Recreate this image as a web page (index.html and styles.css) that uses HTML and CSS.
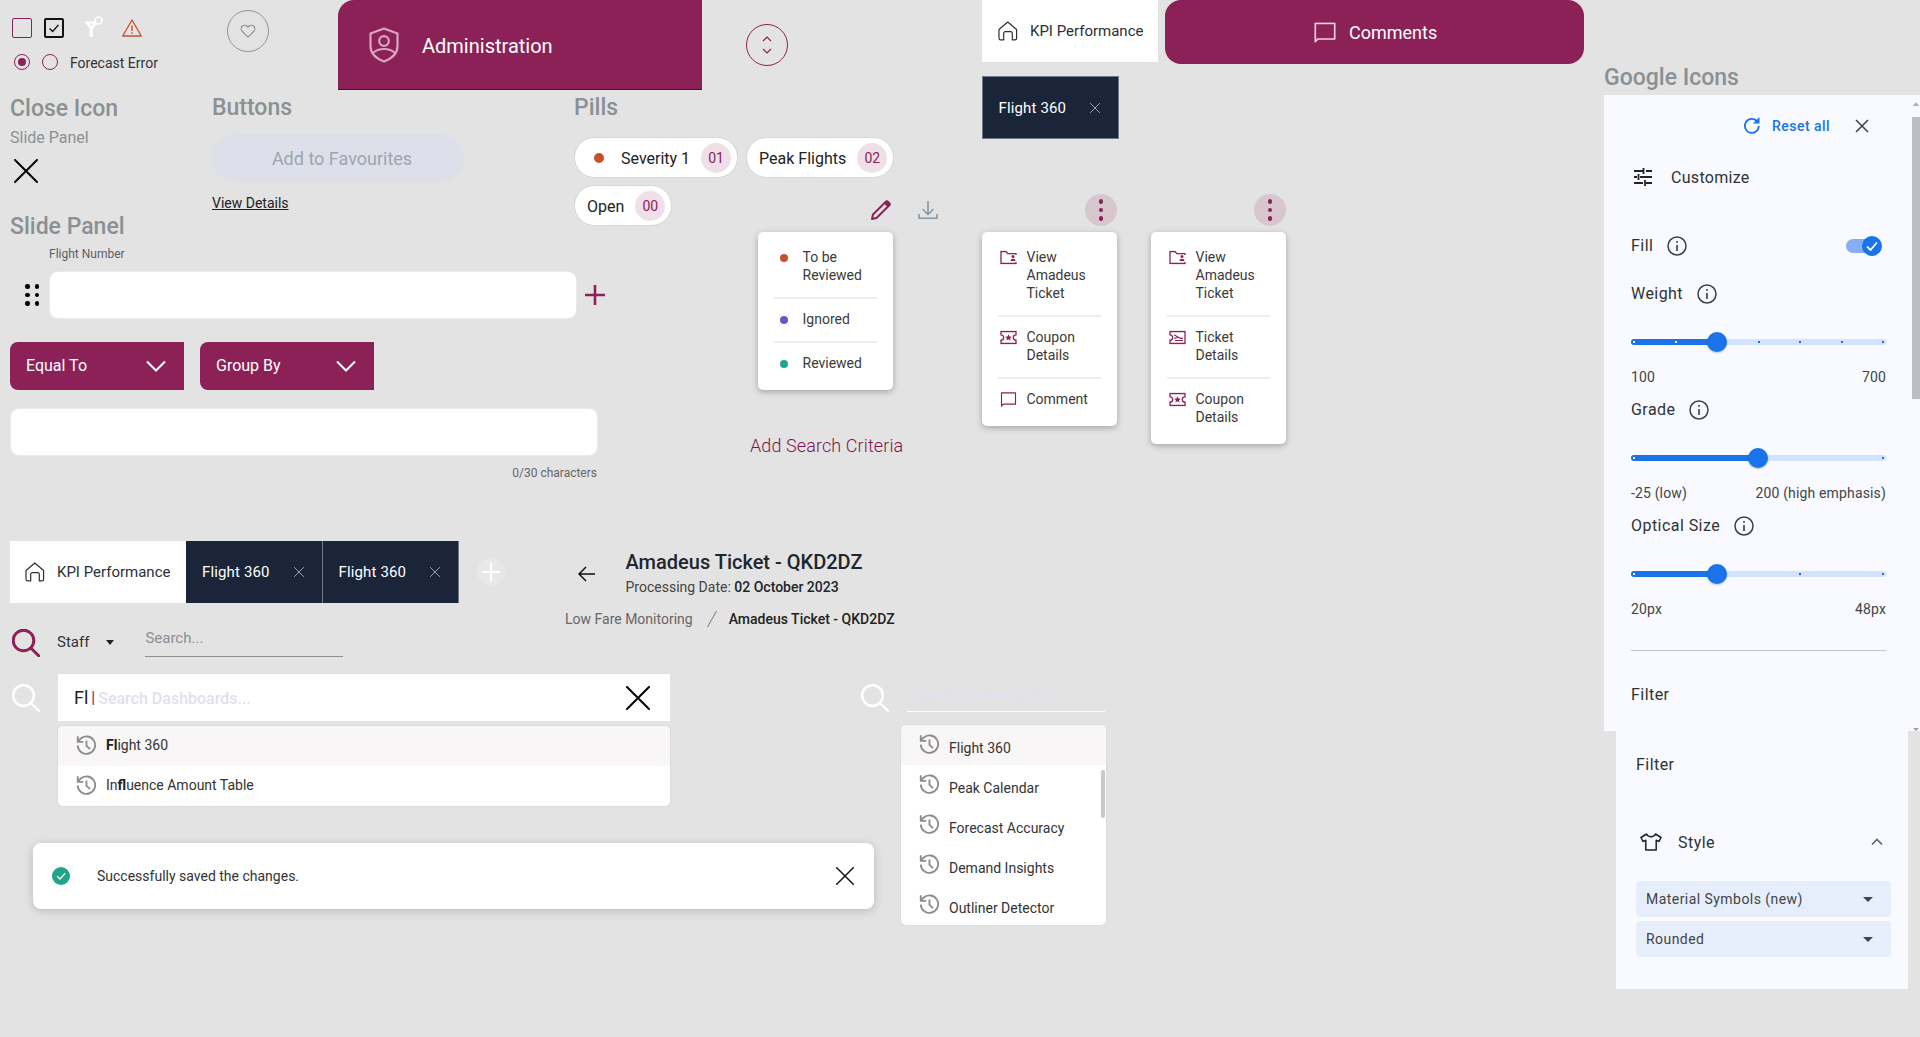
FILE: index.html
```html
<!DOCTYPE html>
<html lang="en">
<head>
<meta charset="utf-8">
<title>Component sheet</title>
<link rel="stylesheet" href="styles.css">
</head>
<body>
<svg class="sprite" aria-hidden="true">
  <defs>
    <symbol id="i-x" viewBox="0 0 24 24"><path d="M1 1 23 23M23 1 1 23" fill="none" stroke="currentColor" stroke-width="2" stroke-linecap="round"/></symbol>
    <symbol id="i-home" viewBox="0 0 20 20"><path d="M1 8.5 9.8 1l8.8 7.5v8.7a1.6 1.6 0 0 1-1.6 1.6h-2.7v-6.6a1.6 1.6 0 0 0-1.6-1.6H7.300a1.600 1.600 0 0 0-1.600 1.600v6.600H2.600A1.600 1.600 0 0 1 1 17.200Z" fill="none" stroke="currentColor" stroke-width="1.200" stroke-linejoin="round"/></symbol>
    <symbol id="i-history" viewBox="0 0 24 24"><g fill="none" stroke="currentColor" stroke-width="2"><path d="M3 12.500A9.500 9.500 0 1 0 6 5.200L3.200 8"/><path d="M3 2.500V8.500H9" stroke-linejoin="miter"/><path d="M12.500 7v6l4 3.500"/></g></symbol>
    <symbol id="i-search" viewBox="0 0 28 28"><circle cx="11.500" cy="11.500" r="10.300" fill="none" stroke="currentColor"/><path d="M18.800 19 27 27" fill="none" stroke="currentColor" stroke-linecap="round"/></symbol>
    <symbol id="i-info" viewBox="0 0 20 20"><circle cx="10" cy="10" r="9" fill="none" stroke="#3c4043" stroke-width="1.500"/><path d="M9.200 9h1.600v6H9.200ZM9.200 5h1.600v1.800H9.200Z" fill="#3c4043"/></symbol>
    <symbol id="i-folder" viewBox="0 0 17 14"><path d="M16 4.500V3.200H7.800L6 1H1v12h15v-1.500" fill="none" stroke="currentColor" stroke-width="1.300"/><circle cx="13" cy="6" r="1.500" fill="currentColor"/><path d="M10.500 10.500c0-1.500 1.200-2.200 2.500-2.200s2.500.7 2.500 2.200Z" fill="currentColor"/></symbol>
    <symbol id="i-coupon" viewBox="0 0 17 14"><path d="M1 1h15v3.300a2.700 2.700 0 0 0 0 5.400V13H1V9.700a2.700 2.700 0 0 0 0-5.400Z" fill="none" stroke="currentColor" stroke-width="1.300"/><path d="m8.500 3.800 1 2.200 2.300.2-1.700 1.500.5 2.300-2.100-1.200-2.100 1.200.5-2.300-1.700-1.500 2.300-.2Z" fill="currentColor"/></symbol>
    <symbol id="i-ticket" viewBox="0 0 17 14"><path d="M1 1h15v12H1V9.700a2.700 2.700 0 0 0 0-5.400Z" fill="none" stroke="currentColor" stroke-width="1.300"/><path d="m5 4.300 6.500 3.600H14M6 10h8M5.500 7.800l3-.8" fill="none" stroke="currentColor" stroke-width="1.200"/></symbol>
    <symbol id="i-comment" viewBox="0 0 17 16"><path d="M1 15V1h15v12H3Z" fill="none" stroke="currentColor" stroke-width="1.300" stroke-linejoin="round"/></symbol>
    <symbol id="i-chev" viewBox="0 0 20 12"><path d="M1 1.500 10 10.500 19 1.500" fill="none" stroke="currentColor" stroke-width="2"/></symbol>
  </defs>
</svg>

<main class="canvas">

  <section class="glyphs">
    <div class="glyph-row">
      <span class="box box-empty"></span>
      <span class="box box-checked"><svg viewBox="0 0 18 18"><path d="M4 9.500 7.500 13 14 5.500" fill="none" stroke="#111" stroke-width="1.600"/></svg></span>
      <svg class="ic-filter" viewBox="0 0 20 22"><path d="M1.500 6H13.500L8.200 12.300V20.500H6.300V12.300Z" fill="#fff" stroke="#fff" stroke-width="1.200" stroke-linejoin="round"/><path d="M5 7.500H10L7.500 10.500Z" fill="#e9e9e9"/><circle cx="14.500" cy="4.500" r="3.400" fill="#e3e3e3" stroke="#fff" stroke-width="1.500"/></svg>
      <svg class="ic-warn" viewBox="0 0 20 18"><path d="M10 1 19.300 17H.7Z" fill="none" stroke="#c94f2c" stroke-width="1.300" stroke-linejoin="round"/><path d="M9.300 6.500h1.400v5.500H9.300ZM9.300 13.200h1.400v1.500H9.300Z" fill="#c94f2c"/></svg>
    </div>
    <div class="radio-row">
      <span class="radio radio-on"></span>
      <span class="radio"></span>
      <span class="radio-label">Forecast Error</span>
    </div>
  </section>

  <button class="heart-btn"><svg viewBox="0 0 18 16"><path d="M9 15 2.300 8.300A4 4 0 0 1 8 2.600l1 1 1-1a4 4 0 0 1 5.700 5.700Z" fill="none" stroke="#8a9499" stroke-width="1.300" stroke-linejoin="round"/></svg></button>

  <div class="admin-tab">
    <svg class="ic-shield" viewBox="0 0 30 36"><path d="M15 1.500 28.500 6.500V19c0 7.500-5.500 12.500-13.500 15.500C7 31.500 1.500 26.500 1.500 19V6.500Z" fill="none" stroke="#d9a6c2" stroke-width="2.200" stroke-linejoin="round"/><circle cx="15" cy="14" r="4.800" fill="none" stroke="#d9a6c2" stroke-width="2.200"/><path d="M4 26c3-3 7-4 11-4s8 1 11 4" fill="none" stroke="#d9a6c2" stroke-width="2.200"/></svg>
    <span>Administration</span>
  </div>

  <button class="sort-btn"><svg viewBox="0 0 10 20"><path d="M1 6 5 2l4 4M1 14l4 4 4-4" fill="none" stroke="#8c2158" stroke-width="1.200"/></svg></button>

  <div class="tab tab-home tab-top"><svg class="ic-home"><use href="#i-home"/></svg><span>KPI Performance</span></div>

  <div class="comments-btn"><svg viewBox="0 0 17 16"><use href="#i-comment"/></svg><span>Comments</span></div>

  <div class="tab tab-flight tab-single"><span>Flight 360</span><svg class="ic-tab-x"><use href="#i-x"/></svg></div>

  <section class="close-sec">
    <h2 class="sheet-title">Close Icon</h2>
    <p class="sheet-sub">Slide Panel</p>
    <svg class="ic-x24"><use href="#i-x"/></svg>
  </section>

  <section class="buttons-sec">
    <h2 class="sheet-title">Buttons</h2>
    <button class="fav-btn">Add to Favourites</button>
    <a class="details-link">View Details</a>
  </section>

  <section class="pills-sec">
    <h2 class="sheet-title">Pills</h2>
    <div class="pill-wrap">
      <span class="pill"><i class="pill-dot"></i><span>Severity 1</span><b class="count">01</b></span>
      <span class="pill"><span>Peak Flights</span><b class="count">02</b></span>
      <span class="pill"><span>Open</span><b class="count">00</b></span>
    </div>
  </section>

  <svg class="ic-pencil" viewBox="0 0 20 20"><path d="M2 14.500 14.800 1.700a1.500 1.500 0 0 1 2.100 0l1.400 1.400a1.500 1.500 0 0 1 0 2.100L5.500 18 1 19Z" fill="none" stroke="#8c2158" stroke-width="2" stroke-linejoin="round"/><path d="M14.500 2 18 5.500" stroke="#8c2158" stroke-width="4"/></svg>
  <svg class="ic-download" viewBox="0 0 20 20"><path d="M10 1v13M4.500 9l5.500 5.500L15.500 9M1 14v4.300h18V14" fill="none" stroke="#8a97a5" stroke-width="1.600"/></svg>

  <section class="slide-sec">
    <h2 class="sheet-title">Slide Panel</h2>
    <label class="field-label">Flight Number</label>
    <div class="field-row">
      <span class="drag"><i></i><i></i><i></i><i></i><i></i><i></i></span>
      <span class="input input-a"></span>
      <svg class="ic-plus" viewBox="0 0 20 20"><path d="M10 0v20M0 10h20" stroke="#8c2158" stroke-width="2.600"/></svg>
    </div>
    <div class="drop-row">
      <div class="drop"><span>Equal To</span><svg><use href="#i-chev"/></svg></div>
      <div class="drop"><span>Group By</span><svg><use href="#i-chev"/></svg></div>
    </div>
    <span class="input input-b"></span>
    <span class="char-count">0/30 characters</span>
  </section>

  <ul class="menu menu-status">
    <li><span class="menu-lead"><i class="status-dot dot-red"></i></span><span>To be Reviewed</span></li>
    <li><span class="menu-lead"><i class="status-dot dot-violet"></i></span><span>Ignored</span></li>
    <li><span class="menu-lead"><i class="status-dot dot-green"></i></span><span>Reviewed</span></li>
  </ul>

  <p class="add-criteria">Add Search Criteria</p>

  <button class="kebab kebab-a"><i></i><i></i><i></i></button>
  <ul class="menu menu-a">
    <li><span class="menu-lead"><svg viewBox="0 0 17 14"><use href="#i-folder"/></svg></span><span>View Amadeus Ticket</span></li>
    <li><span class="menu-lead"><svg viewBox="0 0 17 14"><use href="#i-coupon"/></svg></span><span>Coupon Details</span></li>
    <li><span class="menu-lead"><svg viewBox="0 0 17 16"><use href="#i-comment"/></svg></span><span>Comment</span></li>
  </ul>

  <button class="kebab kebab-b"><i></i><i></i><i></i></button>
  <ul class="menu menu-b">
    <li><span class="menu-lead"><svg viewBox="0 0 17 14"><use href="#i-folder"/></svg></span><span>View Amadeus Ticket</span></li>
    <li><span class="menu-lead"><svg viewBox="0 0 17 14"><use href="#i-ticket"/></svg></span><span>Ticket Details</span></li>
    <li><span class="menu-lead"><svg viewBox="0 0 17 14"><use href="#i-coupon"/></svg></span><span>Coupon Details</span></li>
  </ul>

  <div class="tabbar">
    <div class="tab tab-home"><svg class="ic-home"><use href="#i-home"/></svg><span>KPI Performance</span></div>
    <div class="tab tab-flight"><span>Flight 360</span><svg class="ic-tab-x"><use href="#i-x"/></svg></div>
    <div class="tab tab-flight"><span>Flight 360</span><svg class="ic-tab-x"><use href="#i-x"/></svg></div>
    <button class="tab-add"><svg viewBox="0 0 18 18"><path d="M9 0v18M0 9h18" stroke="#fff" stroke-width="2"/></svg></button>
  </div>

  <header class="page-head">
    <div class="page-title-row">
      <svg class="ic-back" viewBox="0 0 17 16"><path d="M8 1 1 8l7 7M1 8h16" fill="none" stroke="#111" stroke-width="1.500"/></svg>
      <div>
        <h1 class="page-title">Amadeus Ticket - QKD2DZ</h1>
        <p class="page-date">Processing Date: <b>02 October 2023</b></p>
      </div>
    </div>
    <nav class="crumbs"><span class="crumb-root">Low Fare Monitoring</span><svg viewBox="0 0 10 16"><path d="M9.500 0 .5 16" stroke="#777" stroke-width="1"/></svg><span class="crumb-current">Amadeus Ticket - QKD2DZ</span></nav>
  </header>

  <div class="staff-search">
    <svg class="ic-search maroon"><use href="#i-search"/></svg>
    <span class="staff-name">Staff</span>
    <span class="caret"></span>
    <span class="staff-input">Search...</span>
  </div>

  <section class="dash-search">
    <svg class="ic-search"><use href="#i-search"/></svg>
    <div class="dash-col">
      <div class="dash-input">
        <span class="typed">Fl</span><span class="cursor">|</span><span class="ghost">Search Dashboards...</span>
        <svg class="ic-x24 dash-x"><use href="#i-x"/></svg>
      </div>
      <ul class="results">
        <li class="hot"><svg class="ic-history"><use href="#i-history"/></svg><span><b>Fl</b>ight 360</span></li>
        <li><svg class="ic-history"><use href="#i-history"/></svg><span>In<b>fl</b>uence Amount Table</span></li>
      </ul>
    </div>
  </section>

  <section class="dash-search-b">
    <svg class="ic-search"><use href="#i-search"/></svg>
    <div class="dash-b-col">
      <div class="ghost ghost-line">Search Dashboards...</div>
      <ul class="results results-b">
        <li class="hot"><svg class="ic-history"><use href="#i-history"/></svg><span>Flight 360</span></li>
        <li><svg class="ic-history"><use href="#i-history"/></svg><span>Peak Calendar</span></li>
        <li><svg class="ic-history"><use href="#i-history"/></svg><span>Forecast Accuracy</span></li>
        <li><svg class="ic-history"><use href="#i-history"/></svg><span>Demand Insights</span></li>
        <li><svg class="ic-history"><use href="#i-history"/></svg><span>Outliner Detector</span></li>
        <i class="results-thumb"></i>
      </ul>
    </div>
  </section>

  <div class="toast">
    <svg class="ic-ok" viewBox="0 0 18 18"><circle cx="9" cy="9" r="9" fill="#1fa58a"/><path d="M5.200 9.200 8 12l5-5.600" fill="none" stroke="#fff" stroke-width="1.300"/></svg>
    <span class="toast-text">Successfully saved the changes.</span>
    <svg class="ic-toast-x"><use href="#i-x"/></svg>
  </div>

  <h2 class="sheet-title google-title">Google Icons</h2>

  <aside class="panel panel-top">
    <i class="sb-arrow sb-up"></i><i class="sb-thumb"></i><i class="sb-arrow sb-down"></i>
    <div class="reset-row">
      <svg class="ic-reset" viewBox="0 0 18 18"><path d="M15.800 9A7 7 0 1 1 13.800 4" fill="none" stroke="#1a73e8" stroke-width="1.800"/><path d="M16.500 0v6.500H10Z" fill="#1a73e8"/></svg>
      <span class="reset-link">Reset all</span>
      <svg class="ic-panel-x" viewBox="0 0 14 14"><path d="M1 1l12 12M13 1 1 13" stroke="#444" stroke-width="1.600"/></svg>
    </div>
    <div class="row row-custom">
      <svg class="ic-tune" viewBox="0 0 18 18"><path d="M0 3h9M12 3h6M9.500 0v6M0 9h3M6 9h12M4.500 6v6M0 15h9M12 15h6M11 12v6" fill="none" stroke="#222" stroke-width="1.800"/></svg>
      <span>Customize</span>
    </div>
    <div class="row row-fill">
      <span>Fill</span><svg class="ic-info"><use href="#i-info"/></svg>
      <span class="toggle"><svg viewBox="0 0 20 20"><circle cx="10" cy="10" r="10" fill="#1a73e8"/><path d="M5 10.500 8.500 14 15 6.500" fill="none" stroke="#fff" stroke-width="1.800"/></svg></span>
    </div>
    <div class="row row-weight"><span>Weight</span><svg class="ic-info"><use href="#i-info"/></svg></div>
    <div class="slider">
      <span class="slider-fill" style="width:33.7%"></span>
      <span class="ticks"><i class="on"></i><i class="on"></i><i></i><i></i><i></i><i></i><i></i></span>
      <span class="thumb" style="left:33.7%"></span>
    </div>
    <div class="range"><span>100</span><span>700</span></div>
    <div class="row row-grade"><span>Grade</span><svg class="ic-info"><use href="#i-info"/></svg></div>
    <div class="slider">
      <span class="slider-fill" style="width:49.8%"></span>
      <span class="ticks"><i class="on"></i><i class="off"></i><i></i></span>
      <span class="thumb" style="left:49.8%"></span>
    </div>
    <div class="range"><span>-25 (low)</span><span>200 (high emphasis)</span></div>
    <div class="row row-optical"><span>Optical Size</span><svg class="ic-info"><use href="#i-info"/></svg></div>
    <div class="slider slider-optical">
      <span class="slider-fill" style="width:33.7%"></span>
      <span class="ticks"><i class="on"></i><i class="off"></i><i class="off"></i><i class="off"></i><i></i><i class="off"></i><i></i></span>
      <span class="thumb" style="left:33.7%"></span>
    </div>
    <div class="range"><span>20px</span><span>48px</span></div>
    <hr class="panel-rule">
    <div class="row row-filter"><span>Filter</span></div>
  </aside>

  <aside class="panel panel-bottom">
    <div class="row"><span>Filter</span></div>
    <div class="row row-style">
      <svg class="ic-shirt" viewBox="0 0 22 18"><path d="M6.500 1 1 4.500l2 4 2.800-1.200V17h10.400V7.300L19 8.500l2-4L15.500 1c-.8 1.800-2.500 2.700-4.500 2.700S7.300 2.800 6.500 1Z" fill="none" stroke="#202124" stroke-width="1.500" stroke-linejoin="round"/></svg>
      <span>Style</span>
      <svg class="ic-up" viewBox="0 0 12 8"><path d="M1 6.500 6 1.500l5 5" fill="none" stroke="#5f6368" stroke-width="1.600"/></svg>
    </div>
    <div class="select"><span>Material Symbols (new)</span><i class="select-caret"></i></div>
    <div class="select"><span>Rounded</span><i class="select-caret"></i></div>
  </aside>

</main>
</body>
</html>
```

FILE: styles.css
```css
* { box-sizing: border-box; }
html, body { margin: 0; height: 100%; }
body { background: #e3e3e3; font-family: Roboto, "Liberation Sans", sans-serif; color: #222; overflow: hidden; }
h1, h2, p, ul { margin: 0; padding: 0; list-style: none; }
button { border: 0; padding: 0; background: none; font: inherit; }
i { font-style: normal; display: block; }
b { font-weight: 500; }
.sprite { position: absolute; width: 0; height: 0; }

.canvas { position: relative; width: 1920px; height: 1037px; overflow: hidden; }
.canvas > * { position: absolute; }

/* Sheet headings */
.sheet-title { font-size: 23px; line-height: 28px; padding-top: 1px; font-weight: 500; color: #8a9094; }

/* Top-left glyphs */
.glyphs { left: 12px; top: 16px; }
.glyph-row { display: flex; align-items: center; height: 22px; }
.box { width: 20px; height: 20px; border-radius: 2px; border: 1px solid #8c2158; margin-top: 2px; }
.box-checked { margin-left: 12px; border: 2px solid #111; display: flex; }
.box-checked svg { width: 16px; height: 16px; }
.ic-filter { width: 20px; height: 22px; margin-left: 20px; }
.ic-warn { width: 20px; height: 18px; margin-left: 18px; margin-top: 2px; }
.radio-row { display: flex; align-items: center; margin-top: 16px; height: 16px; padding-left: 2px; }
.radio { width: 16px; height: 16px; border-radius: 50%; border: 1px solid #8c2158; margin-right: 12px; position: relative; }
.radio-on::after { content: ""; position: absolute; inset: 3px; border-radius: 50%; background: #8c2158; }
.radio-label { font-size: 14px; line-height: 16px; color: #333; margin-top: 2px; }

.heart-btn { left: 227px; top: 10px; width: 42px; height: 42px; border: 1px solid #8f979c; border-radius: 50%; display: flex; align-items: center; justify-content: center; }
.heart-btn svg { width: 16px; height: 14px; }

.admin-tab { left: 338px; top: 0; width: 364px; height: 90px; background: #8c2158; border-top-left-radius: 16px; border-bottom: 1px solid #3c1a30; display: flex; align-items: center; padding-left: 31px; gap: 23px; color: #fff; font-size: 20px; }
.admin-tab span { padding-top: 2px; }
.ic-shield { width: 30px; height: 36px; }

.sort-btn { left: 746px; top: 24px; width: 42px; height: 42px; border: 1px solid #8c2158; border-radius: 50%; display: flex; align-items: center; justify-content: center; }
.sort-btn svg { width: 10px; height: 20px; }

/* Tabs */
.tab { height: 62px; display: flex; align-items: center; font-size: 15px; flex: none; }
.tab-home { width: 176px; background: #fff; color: #2b2f36; padding-left: 16px; gap: 12px; }
.tab-flight { width: 136.500px; background: #1a2539; color: #fff; padding-left: 16px; border-right: 1px solid #6f7888; letter-spacing: .15px; position: relative; }
.ic-home { width: 20px; height: 20px; color: #2b2f36; }
.ic-tab-x { position: absolute; right: 18px; top: 26px; width: 10px; height: 10px; color: #b7bcc5; }
.tab-top { left: 982px; top: 0; }
.tab-single { left: 982px; top: 76px; width: 137px; height: 63px; border: 1px solid #6f7888; padding-left: 15.500px; }
.tabbar { left: 10px; top: 541px; display: flex; align-items: center; }
.tabbar .tab-home { padding-left: 15px; }
.tab-add { margin-left: 18px; width: 28px; height: 28px; border-radius: 50%; background: #e8e8e8; display: flex; align-items: center; justify-content: center; }
.tab-add svg { width: 18px; height: 18px; }

.comments-btn { left: 1165px; top: 0; width: 419px; height: 64px; background: #8c2158; border-radius: 16px; color: #fff; font-size: 18px; display: flex; align-items: center; gap: 13px; padding-left: 149px; }
.comments-btn svg { width: 22px; height: 21px; color: #f3cfe2; }

/* Close icon / buttons / pills */
.close-sec { left: 10px; top: 94px; display: flex; flex-direction: column; }
.sheet-sub { font-size: 16px; line-height: 20px; color: #8a9094; margin-top: 5px; }
.ic-x24 { width: 24px; height: 24px; color: #000; }
.close-sec .ic-x24 { margin: 11px 0 0 4px; }

.buttons-sec { left: 212px; top: 93px; display: flex; flex-direction: column; align-items: flex-start; }
.fav-btn { width: 252px; height: 48px; border-radius: 24px; margin-top: 12px; padding-left: 8px; background: #dde0ea; color: #a0a4ad; font-size: 18px; }
.details-link { margin-top: 13px; font-size: 14px; line-height: 16px; color: #222; text-decoration: underline; }

.pills-sec { left: 574px; top: 93px; width: 330px; }
.pill-wrap { display: flex; flex-wrap: wrap; gap: 7px 8px; margin-top: 15px; }
.pill { height: 41px; display: flex; align-items: center; background: #fff; border: 1px solid #d6d6d6; border-radius: 21px; font-size: 16px; padding: 1px 6px 0 12px; color: #222; }
.pill-dot { width: 10px; height: 10px; border-radius: 50%; background: #c94f2c; margin: 0 17px 0 7px; }
.count { width: 30px; height: 30px; border-radius: 50%; background: #efdfe7; color: #8c2158; font-size: 14px; font-weight: 400; display: flex; align-items: center; justify-content: center; margin-left: 11px; }

.ic-pencil { left: 871px; top: 200px; width: 20px; height: 20px; }
.ic-download { left: 918px; top: 200px; width: 20px; height: 20px; }

/* Slide panel */
.slide-sec { left: 10px; top: 212px; width: 640px; }
.field-label { display: block; font-size: 12px; line-height: 14px; color: #5a5f63; margin: 6px 0 0 39px; }
.field-row { display: flex; align-items: center; margin-top: 11px; }
.drag { width: 14px; margin-left: 15px; display: grid; grid-template-columns: 4.500px 4.500px; gap: 4px; justify-content: space-between; }
.drag i { width: 4.500px; height: 4.500px; border-radius: 50%; background: #000; }
.input { display: block; height: 46px; background: #fff; border-radius: 8px; box-shadow: 0 0 0 1px #e9e9ee; }
.input-a { width: 526px; margin-left: 11px; }
.ic-plus { width: 20px; height: 20px; margin-left: 9px; }
.drop-row { display: flex; gap: 16px; margin-top: 24px; }
.drop { width: 174px; height: 48px; background: #8c2158; border-radius: 8px 0 0 8px; color: #fff; font-size: 16px; display: flex; align-items: center; justify-content: space-between; padding: 0 18px 0 16px; }
.drop span { margin-top: -2px; }
.drop svg { width: 20px; height: 12px; color: #fff; }
.input-b { width: 586px; margin: 19px 0 0 1px; }
.char-count { display: block; width: 587px; text-align: right; font-size: 12px; line-height: 14px; color: #666; margin-top: 11px; }

/* Menus */
.menu { width: 135px; background: #fff; border-radius: 5px; box-shadow: 0 2px 6px rgba(0,0,0,.28); padding: 5px 16px; font-size: 14px; line-height: 18px; color: #3a3a3a; }
.menu li { display: flex; padding: 11px 0 13px; border-bottom: 2px solid #eee; }
.menu li:last-child { border-bottom: 0; }
.menu-lead { width: 28.500px; flex: none; padding-top: 2px; }
.menu-lead svg { display: block; width: 17px; height: 15px; margin-left: 2px; color: #8c2158; }
.status-dot { width: 8px; height: 8px; border-radius: 50%; margin: 4px 0 0 6px; }
.dot-red { background: #c94f2c; }
.dot-violet { background: #6457c9; }
.dot-green { background: #1fa58a; }
.menu-status { left: 758px; top: 232px; }
.menu-a { left: 982px; top: 232px; }
.menu-b { left: 1151px; top: 232px; }
.add-criteria { left: 750px; top: 435px; font-size: 18px; line-height: 22px; font-weight: 300; letter-spacing: .1px; color: #7f1450; }

.kebab { width: 32px; height: 32px; border-radius: 50%; background: #d8c6ce; display: flex; flex-direction: column; align-items: center; justify-content: center; gap: 4px; }
.kebab i { width: 4.500px; height: 4.500px; border-radius: 50%; background: #8c2158; }
.kebab-a { left: 1085px; top: 194px; }
.kebab-b { left: 1254px; top: 194px; }

/* Page head */
.page-head { left: 565px; top: 548px; }
.page-title-row { display: flex; align-items: center; padding-left: 13px; gap: 30.500px; }
.ic-back { width: 17px; height: 16px; margin-top: 4px; }
.page-title { font-size: 20px; line-height: 28px; font-weight: 500; color: #20262e; }
.page-date { font-size: 14px; line-height: 18px; color: #444; margin-top: 2px; }
.page-date b { color: #20262e; font-weight: 500; }
.crumbs { display: flex; align-items: center; font-size: 14px; line-height: 16px; margin-top: 15px; }
.crumbs svg { width: 10px; height: 16px; margin: 0 12px 0 14px; }
.crumb-root { color: #666; }
.crumb-current { color: #222; font-weight: 500; font-size: 14px; }

/* Searches */
.ic-search { width: 28px; height: 28px; color: #fff; flex: none; stroke-width: 2.400; }
.ic-search.maroon { color: #8c2158; stroke-width: 3; }
.staff-search { left: 12px; top: 628px; display: flex; align-items: center; width: 345px; }
.staff-name { font-size: 15px; margin: -2px 0 0 17px; color: #333; }
.caret { width: 0; height: 0; border: 4px solid transparent; border-top: 5px solid #222; border-bottom: 0; margin-left: 17px; }
.staff-input { width: 198px; margin-left: 31px; height: 29px; font-size: 15px; line-height: 20px; color: #8a8f94; border-bottom: 1px solid #8f8f8f; }

.dash-search { left: 12px; top: 674px; display: flex; }
.dash-search > .ic-search { margin-top: 10px; }
.dash-col { width: 612px; margin-left: 18px; }
.dash-input { height: 47px; background: #fff; display: flex; align-items: center; padding-left: 16px; position: relative; }
.typed { font-size: 18px; color: #222; }
.cursor { color: #8c2158; font-size: 16px; margin: 0 3px; }
.dash-input .ghost { margin-top: 2px; }
.ghost { font-size: 16px; font-weight: 500; color: #dfe1ec; }
.dash-x { position: absolute; right: 20px; top: 12px; }
.results { margin-top: 5px; height: 80px; background: #fff; border-radius: 5px; box-shadow: 0 0 0 1px #dcdcdc; overflow: hidden; font-size: 14px; color: #333; }
.results li { height: 40px; display: flex; align-items: center; padding-left: 17px; gap: 9px; }
.results li span { margin-top: -2px; }
.results li.hot { background: #f9f6f7; }
.results b { font-weight: 700; color: #222; }
.ic-history { width: 22px; height: 22px; color: #8c8c8c; margin-top: -3px; }

.dash-search-b { left: 861px; top: 684px; display: flex; }
.dash-b-col { width: 205px; margin-left: 12px; }
.ghost-line { margin-left: 6px; width: 198px; height: 28px; padding-top: 2px; border-bottom: 1px solid #fff; line-height: 20px; white-space: nowrap; }
.results-b { height: 200px; margin-top: 13px; position: relative; }
.results-b li span { margin-top: 0; padding-top: 6px; }
.results-thumb { position: absolute; right: 1px; top: 45px; width: 4px; height: 48px; border-radius: 2px; background: #c8c8c8; }

/* Toast */
.toast { left: 33px; top: 843px; width: 841px; height: 66px; background: #fff; border-radius: 8px; box-shadow: 0 2px 10px rgba(0,0,0,.18); display: flex; align-items: center; padding-left: 19px; }
.ic-ok { width: 18px; height: 18px; }
.toast-text { font-size: 14px; color: #333; margin-left: 27px; }
.ic-toast-x { width: 18px; height: 18px; color: #111; margin-left: auto; margin-right: 20px; }

/* Google panel */
.google-title { left: 1604px; top: 63px; }
.panel { background: #f8faff; color: #303134; font-size: 15px; overflow: hidden; }
.panel-top { left: 1604px; top: 95px; width: 316px; height: 636px; padding: 19px 0 0 27px; }
.panel-bottom { left: 1616px; top: 731px; width: 292px; height: 258px; padding: 21px 0 0 20px; }
.sb-thumb { position: absolute; right: 0; top: 22px; width: 8px; height: 282px; background: #bcbec2; }
.sb-arrow { position: absolute; right: 1px; width: 0; height: 0; border: 3px solid transparent; }
.sb-up { top: 7px; border-bottom: 4px solid #b0b0b0; border-top: 0; }
.sb-down { bottom: 0; border-top: 3px solid #a0a0a0; border-bottom: 0; }

.reset-row { display: flex; align-items: center; height: 24px; width: 238px; justify-content: flex-end; }
.ic-reset { width: 18px; height: 18px; }
.reset-link { color: #1a73e8; font-size: 14px; font-weight: 500; margin-left: 11px; letter-spacing: .45px; }
.ic-panel-x { width: 14px; height: 14px; margin-left: 25px; }

.row { display: flex; align-items: center; height: 24px; gap: 14px; width: 255px; font-size: 16px; letter-spacing: .45px; color: #303134; }
.row-custom { margin-top: 27px; gap: 19px; padding-left: 3px; letter-spacing: .3px; }
.row-fill { margin-top: 44px; }
.row-weight { margin-top: 24px; }
.row-grade { margin-top: 10px; }
.row-optical { margin-top: 10px; }
.row-filter { margin-top: 31px; }
.ic-tune { width: 18px; height: 18px; }
.ic-info { width: 20px; height: 20px; margin-top: 2px; }
.toggle { margin-left: auto; margin-right: 14px; width: 36px; height: 14px; margin-top: 2px; padding-left: 10px; position: relative; }
.toggle::before { content: ""; position: absolute; left: 10px; top: 0; width: 26px; height: 14px; border-radius: 7px; background: #85aef5; }
.toggle svg { position: absolute; right: -10px; top: -3px; width: 20px; height: 20px; }

.slider { position: relative; width: 255px; height: 6px; margin-top: 34px; border-radius: 3px; background: #d3e3fd; display: flex; }
.slider-fill { display: block; height: 6px; border-radius: 3px; background: #1a73e8; }
.ticks { position: absolute; inset: 0 2px; display: flex; align-items: center; justify-content: space-between; }
.ticks i { width: 2px; height: 2px; background: #1a73e8; }
.ticks i.on { background: #fff; }
.ticks i.off { background: none; }
.thumb { position: absolute; top: 3px; width: 20px; height: 20px; margin: -10px 0 0 -10px; border-radius: 50%; background: #1a73e8; box-shadow: 0 1px 2px rgba(0,0,0,.25); }
.range { display: flex; justify-content: space-between; width: 255px; height: 20px; margin-top: 22px; font-size: 14px; line-height: 20px; color: #444; letter-spacing: .15px; }
.panel-rule { width: 255px; height: 1px; border: 0; background: #c4c7c5; margin: 31px 0 0; }

.row-style { margin-top: 54px; gap: 16px; padding-left: 4px; position: relative; width: 255px; }
.ic-shirt { width: 22px; height: 18px; }
.ic-up { position: absolute; right: 8px; top: 8px; width: 12px; height: 8px; }
.select { width: 255px; height: 36px; background: #e6eefb; border-radius: 4px; display: flex; align-items: center; justify-content: space-between; padding: 0 18px 0 10px; font-size: 14px; letter-spacing: .45px; color: #444; margin-top: 4px; }
.row-style + .select { margin-top: 27px; }
.select-caret { width: 0; height: 0; border: 5px solid transparent; border-top: 5px solid #444; border-bottom: 0; }
```
